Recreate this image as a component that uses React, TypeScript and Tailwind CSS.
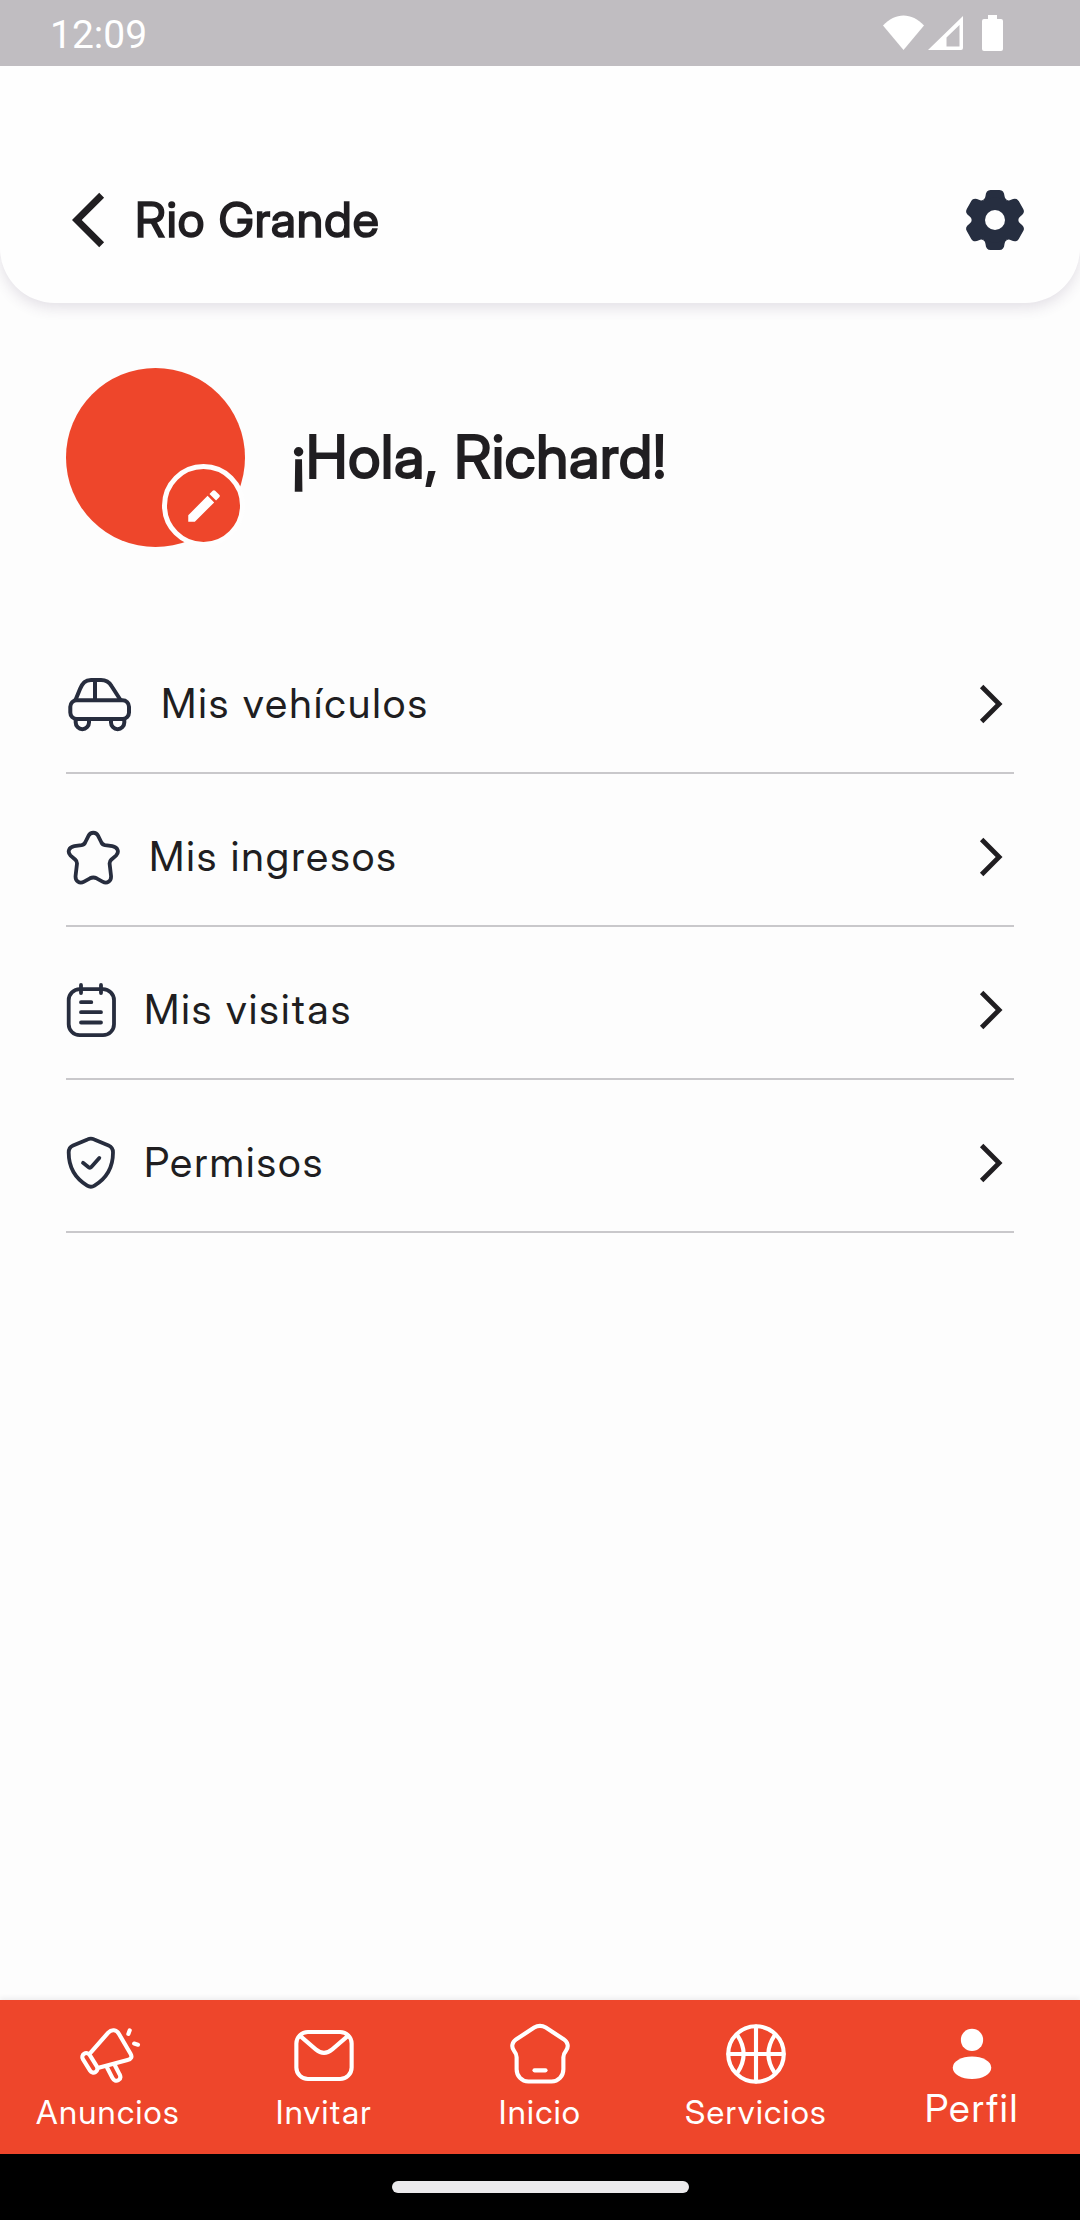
import type { ReactNode } from 'react';
import { MdEdit } from 'react-icons/md';

interface Item {
  label: string;
  icon: ReactNode;
  active?: boolean;
}

const line = {
  fill: 'none',
  stroke: 'currentColor',
  strokeLinecap: 'round',
  strokeLinejoin: 'round',
} as const;

function CarIcon() {
  return (
    <svg viewBox="0 0 67 60" className="h-[60px] w-[67px]" strokeWidth="4" {...line}>
      <path d="M9.5 26 14 15c2.6-6.2 5.2-9 11-9h10c5 0 8 1.6 10.5 6L54.5 26M29 6v20" />
      <rect x="4.3" y="26.3" width="58.7" height="18.7" rx="6.5" />
      <path d="M9.7 45v3.5a6.65 6.65 0 0 0 13.3 0V45M45 45v3.5a6.65 6.65 0 0 0 13.3 0V45" />
    </svg>
  );
}

function StarIcon() {
  return (
    <svg viewBox="0 0 55 60" className="h-[60px] w-[55px]" strokeWidth="3.8" {...line}>
      <path d="M22.6 8.6C24.5 4.8 30.1 4.8 32 8.6L35.2 15C35.9 16.8 37 17.8 39 18.2L46.3 19.2C51.8 20.2 53.6 25 50 28.6L45.2 32.8C43.8 34 43.4 35.5 43.7 37.5L45 48.6C45.6 54.4 41 57 36.5 54.6L30.6 51.3C28.4 50.2 26.2 50.2 24 51.3L18.1 54.6C13.6 57 9 54.4 9.6 48.6L10.9 37.5C11.2 35.5 10.8 34 9.4 32.8L4.6 28.6C1 25 2.8 20.2 8.3 19.2L15.6 18.2C17.6 17.8 18.7 16.8 19.4 15Z" />
    </svg>
  );
}

function NotesIcon() {
  return (
    <svg viewBox="0 0 50 60" className="h-[60px] w-[50px]" strokeWidth="3.8" {...line}>
      <rect x="2.7" y="9.2" width="45.3" height="46" rx="11" />
      <path d="M15 5v8M35 5v8M15 22.2h10.3M15 32.2h20M15 42.5h20" />
    </svg>
  );
}

function ShieldIcon() {
  return (
    <svg viewBox="0 0 50 60" className="h-[60px] w-[50px]" strokeWidth="3.8" {...line}>
      <path d="M21.5 6.4C23.6 5.4 26.1 5.4 28.2 6.4L42.6 12.6C45.8 14 47 16 47 19.5C47 33 41 45 28.5 52.6C26.3 54 23.4 54 21.2 52.6C8.7 45 2.7 33 2.7 19.5C2.7 16 3.9 14 7.1 12.6Z" />
      <path d="M17 29.8 22.6 34.2C23.6 35 24.5 34.9 25.3 34L33.3 25" />
    </svg>
  );
}

function GearIcon() {
  return (
    <svg viewBox="-30 -30 60 60" className="size-[60px] fill-[#262e40]">
      {[0, 60, 120, 180, 240, 300].map((angle) => (
        <path
          key={angle}
          transform={`rotate(${angle})`}
          d="M0 0-11.65-20.2Q-9.6-21.4-9.5-24C-9.2-28-7.5-30-4.5-30H4.5C7.5-30 9.2-28 9.5-24Q9.6-21.4 11.65-20.2Z"
        />
      ))}
      <circle r="22.5" />
      <circle r="10" className="fill-[#fefefe]" />
    </svg>
  );
}

function MegaphoneIcon() {
  return (
    <svg viewBox="0 0 24 24" className="size-[66px]" strokeWidth="1.5" {...line}>
      <path d="M5.7 11.5 12.1 4.2C13.3 2.9 15.1 3.1 16 4.7L20.2 11.9C20.9 13.1 20.4 13.9 19.1 14.2L8.6 17" />
      <path d="M5.33 12.33 7.93 16.53A1.45 1.45 0 0 1 5.47 18.07L2.87 13.87A1.45 1.45 0 0 1 5.33 12.33Z" />
      <path d="M11.7 17 13.6 20.7C14.1 21.7 15 22 15.8 21.5C16.6 21 16.7 20.3 16.2 19.4L14.4 15.9M19.9 3.4 19.4 4.7M21.5 8.2 22.9 8.6" />
    </svg>
  );
}

function MailIcon() {
  return (
    <svg viewBox="0 0 24 24" className="size-[66px]" strokeWidth="1.5" {...line}>
      <rect x="1.95" y="4" width="20.1" height="17.1" rx="4.2" />
      <path d="M3.3 5.4 9 10.3C11 12 13 12 15 10.3L20.7 5.4" />
    </svg>
  );
}

function HomeIcon() {
  return (
    <svg viewBox="0 0 24 24" className="size-[66px]" strokeWidth="1.5" {...line}>
      <path d="M9.9 2.4C11.2 1.6 12.8 1.6 14.1 2.4L20.6 6.6C22.2 7.7 22.5 9.4 21.5 10.7C20.8 11.6 20.5 12 20.5 13.2V17.5C20.5 20 18.7 22 16.2 22H7.8C5.3 22 3.5 20 3.5 17.5V13.2C3.5 12 3.2 11.6 2.5 10.7C1.5 9.4 1.8 7.7 3.4 6.6Z" />
      <path d="M10 17.95h4" />
    </svg>
  );
}

function BallIcon() {
  return (
    <svg viewBox="0 0 24 24" className="size-[66px]" strokeWidth="1.5" {...line}>
      <circle cx="12" cy="12" r="10.1" />
      <path d="M12 2v20M2 12h20M5.2 5.1Q9.8 12 5.2 18.9M18.8 5.1Q14.2 12 18.8 18.9" />
    </svg>
  );
}

function UserIcon() {
  return (
    <svg viewBox="0 0 24 24" className="size-[66px] fill-current">
      <circle cx="12" cy="6.9" r="4.05" />
      <ellipse cx="12" cy="17" rx="7" ry="4.05" />
    </svg>
  );
}

const menu: Item[] = [
  { label: 'Mis vehículos', icon: <CarIcon /> },
  { label: 'Mis ingresos', icon: <StarIcon /> },
  { label: 'Mis visitas', icon: <NotesIcon /> },
  { label: 'Permisos', icon: <ShieldIcon /> },
];

const nav: Item[] = [
  { label: 'Anuncios', icon: <MegaphoneIcon /> },
  { label: 'Invitar', icon: <MailIcon /> },
  { label: 'Inicio', icon: <HomeIcon /> },
  { label: 'Servicios', icon: <BallIcon /> },
  { label: 'Perfil', icon: <UserIcon />, active: true },
];

function StatusBar() {
  return (
    <div className="flex h-[66px] items-center justify-between bg-[#c0bdc1] pr-[77px] pl-[50px] text-white">
      <span className="pt-[4px] font-['Roboto',sans-serif] text-[39px] leading-none">12:09</span>
      <div className="flex items-center">
        <svg viewBox="0 0 41 36" className="h-9 w-[41px] fill-current">
          <path d="M0 10.5C12-3 29-3 41 10.5L20.5 35Z" />
        </svg>
        <svg viewBox="0 0 35 36" className="ml-[4px] h-9 w-[35px] fill-current">
          <path fillRule="evenodd" d="M35 1V33Q35 35 33 35H0ZM31.5 10 18.5 22.5V31.5H31.5Z" />
        </svg>
        <svg viewBox="0 0 21 36" className="ml-[19px] h-9 w-[21px] fill-current">
          <path d="M6 0h9v4h4q2 0 2 2v28q0 2-2 2H2q-2 0-2-2V6q0-2 2-2h4Z" />
        </svg>
      </div>
    </div>
  );
}

export default function App() {
  return (
    <div className="flex h-[2220px] w-[1080px] flex-col overflow-hidden bg-[#fdfdfd] font-['Inter_Display','Inter',sans-serif] text-[#201e21]">
      {/* Header */}
      <header className="rounded-b-[55px] bg-[#fefefe] shadow-[0_5px_14px_rgba(70,50,90,0.14)]">
        <StatusBar />
        <div className="flex h-[237px] items-center pt-[71px] pr-[55px] pl-[72px]">
          <svg viewBox="0 0 24 24" className="size-[66px] fill-current">
            <path d="M11.67 3.87 9.9 2.1 0 12l9.9 9.9 1.77-1.77L3.54 12z" />
          </svg>
          <h1 className="-ml-[3px] flex-1 pt-[1px] text-[48.5px] leading-none font-normal tracking-[1px] [-webkit-text-stroke:1.6px_currentColor]">
            Rio Grande
          </h1>
          <GearIcon />
        </div>
      </header>

      {/* Profile */}
      <section className="flex items-center pt-[65px] pl-[66px]">
        <div className="relative size-[179px] rounded-full bg-[#ee462b]">
          <div className="absolute right-0 bottom-0 flex size-[83px] items-center justify-center rounded-full border-[5.5px] border-[#fefefe] bg-[#ee462b]">
            <MdEdit className="size-[42px] text-white" />
          </div>
        </div>
        <h2 className="ml-[47px] text-[58.5px] leading-none font-normal tracking-[0.8px] [-webkit-text-stroke:2px_currentColor]">
          ¡Hola, Richard!
        </h2>
      </section>

      {/* Menu */}
      <ul className="mt-[74px] flex-1 px-[66px]">
        {menu.map((item) => (
          <li
            key={item.label}
            className="flex h-[153px] items-center justify-between border-b-2 border-[#c9c8cb] pt-[14px]"
          >
            <div className="flex items-center gap-[28px]">
              <span className="text-[#272d3e]">{item.icon}</span>
              <span className="text-[41.25px] leading-none tracking-[2px]">{item.label}</span>
            </div>
            <svg viewBox="0 0 24 24" className="size-[46px] fill-current">
              <path d="M6.23 20.23 8 22l10-10L8 2 6.23 3.77 14.46 12z" />
            </svg>
          </li>
        ))}
      </ul>

      {/* Bottom navigation */}
      <nav className="grid h-[154px] grid-cols-5 bg-[#ee462b] pt-[21px] text-white shadow-[0_-2px_5px_rgba(50,40,60,0.08)]">
        {nav.map((item) => (
          <div key={item.label} className="flex flex-col items-center">
            {item.icon}
            <span
              className={
                item.active
                  ? 'mt-[2px] text-[38.5px] leading-none tracking-[1.8px]'
                  : 'mt-[9px] text-[33px] leading-none tracking-[1.3px]'
              }
            >
              {item.label}
            </span>
          </div>
        ))}
      </nav>
      <div className="flex h-[66px] justify-center bg-black pt-[27px]">
        <div className="h-[12px] w-[297px] rounded-full bg-[#ebeaec]" />
      </div>
    </div>
  );
}
